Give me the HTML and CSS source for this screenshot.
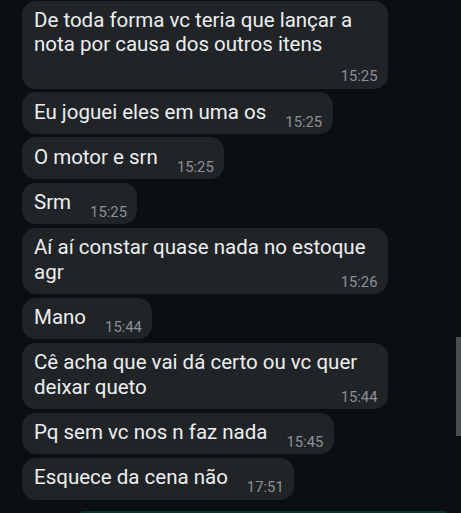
FILE: index.html
```html
<!DOCTYPE html>
<html lang="pt-BR">
<head>
<meta charset="utf-8">
<title>Conversa</title>
<link rel="stylesheet" href="styles.css">
</head>
<body>
<div class="chat">
  <div class="bubble bubble--below"><span class="text">De toda forma vc teria que lançar a nota por causa dos outros itens</span><span class="time">15:25</span></div>
  <div class="bubble"><span class="text">Eu joguei eles em uma os</span><span class="time">15:25</span></div>
  <div class="bubble"><span class="text">O motor e srn</span><span class="time">15:25</span></div>
  <div class="bubble"><span class="text">Srm</span><span class="time">15:25</span></div>
  <div class="bubble bubble--stack"><span class="text">Aí aí constar quase nada no estoque agr</span><span class="time">15:26</span></div>
  <div class="bubble"><span class="text">Mano</span><span class="time">15:44</span></div>
  <div class="bubble bubble--stack"><span class="text">Cê acha que vai dá certo ou vc quer deixar queto</span><span class="time">15:44</span></div>
  <div class="bubble"><span class="text">Pq sem vc nos n faz nada</span><span class="time">15:45</span></div>
  <div class="bubble"><span class="text">Esquece da cena não</span><span class="time">17:51</span></div>
  <div class="bubble-out"></div>
</div>
<div class="scrollbar"></div>
</body>
</html>
```
FILE: styles.css
```css
html, body {
  margin: 0;
  height: 513px;
  overflow: hidden;
  background: #0b0f12;
}
body {
  position: relative;
  font-family: Roboto, "Noto Sans", "Liberation Sans", sans-serif;
}
.chat {
  display: flex;
  flex-direction: column;
  align-items: flex-start;
  gap: 3.5px;
  padding: 0.5px 0 0 22px;
}
.bubble {
  display: flex;
  align-items: flex-end;
  max-width: 366px;
  box-sizing: border-box;
  padding: 7.5px 10.5px 4.3px 12px;
  background: #202427;
  border-radius: 14px;
}
.text {
  font-size: 20.5px;
  line-height: 24.4px;
  color: #eceeef;
  padding-bottom: 5.6px;
}
.time {
  font-size: 14.8px;
  line-height: 16px;
  color: #8b9195;
  margin-left: 19px;
  white-space: nowrap;
  flex: none;
}
.bubble--below {
  flex-direction: column;
  align-items: stretch;
}
.bubble--below .time {
  align-self: flex-end;
  margin-top: 5.8px;
}
.bubble--stack {
  display: grid;
  width: 366px;
}
.bubble--stack .text,
.bubble--stack .time {
  grid-area: 1 / 1;
}
.bubble--stack .time {
  justify-self: end;
  align-self: end;
}
.bubble-out {
  align-self: flex-end;
  margin-right: 14px;
  margin-top: 7.8px;
  width: 367px;
  height: 40px;
  background: #0c3129;
  border-radius: 3px;
}
.scrollbar {
  position: absolute;
  right: 0;
  top: 337px;
  width: 5px;
  height: 99px;
  background: #4a4e51;
}
```
